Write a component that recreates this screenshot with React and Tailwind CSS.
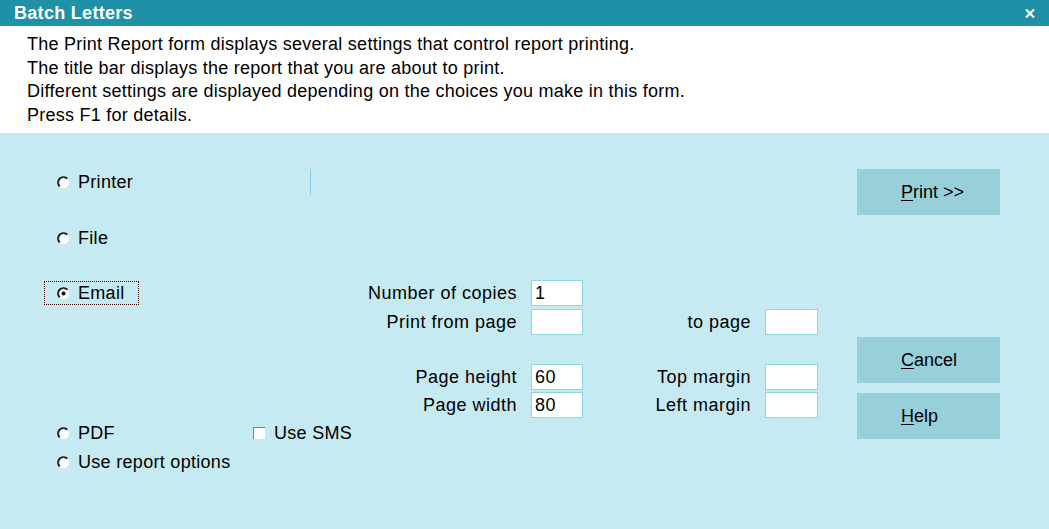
import React from "react";

const font = { fontFamily: '"Liberation Sans", Arial, sans-serif' };

const Radio = ({ checked }) => (
  <svg width="13" height="13" viewBox="0 0 13 13" className="shrink-0">
    <circle cx="6.5" cy="6.5" r="5.5" fill="#ffffff" />
    <path d="M2.6 10.4 A5.5 5.5 0 0 1 10.4 2.6" fill="none" stroke="#000" strokeWidth="1.6" />
    <path d="M3.3 9.7 A4.5 4.5 0 0 1 9.7 3.3" fill="none" stroke="#808080" strokeWidth="0.8" />
    {checked && <circle cx="6.5" cy="6.5" r="2" fill="#000" />}
  </svg>
);

const RadioRow = ({ label, checked, focused, className = "" }) => (
  <div
    className={`flex items-center h-[24px] pl-[12px] pr-[13px] border ${
      focused ? "border-dotted border-[#3a0000]" : "border-transparent"
    } ${className}`}
  >
    <Radio checked={checked} />
    <span className="ml-[8px] text-[18px] leading-none tracking-[0.3px] text-black">{label}</span>
  </div>
);

const Field = ({ value }) => (
  <div className="h-[26px] bg-white border border-[#8fd6e3] pl-[3px] flex items-center text-[18px] text-black">
    {value}
  </div>
);

const Button = ({ first, rest, className = "" }) => (
  <button
    className={`w-[143px] h-[46px] bg-[#97cfdb] text-[18px] text-black flex items-center justify-start pl-[44px] ${className}`}
  >
    <span>
      <span className="underline underline-offset-2">{first}</span>
      {rest}
    </span>
  </button>
);

const App = () => {
  return (
    <div className="w-[1049px] h-[529px] bg-[#c5eaf2] flex flex-col overflow-hidden" style={font}>
      {/* Title bar */}
      <div className="h-[26px] shrink-0 bg-[#1e91a7] flex items-center px-[14px]">
        <span className="text-white font-bold text-[18px] leading-none tracking-[0.3px]">Batch Letters</span>
        <svg width="10" height="9" viewBox="0 0 10 9" className="ml-auto">
          <path d="M1 0.5 L9 8.5 M9 0.5 L1 8.5" stroke="#fff" strokeWidth="2.2" />
        </svg>
      </div>

      {/* Description */}
      <div className="h-[107px] shrink-0 bg-white pl-[27px] pt-[7px] text-[18px] leading-[23.5px] tracking-[0.25px] text-black">
        <div>The Print Report form displays several settings that control report printing.</div>
        <div>The title bar displays the report that you are about to print.</div>
        <div>Different settings are displayed depending on the choices you make in this form.</div>
        <div>Press F1 for details.</div>
      </div>

      {/* Body */}
      <div className="flex pl-[44px] pt-[36px]">
        {/* Destination options */}
        <div className="w-[323px] flex flex-col items-start">
          <div className="flex items-center h-[26px] w-full">
            <RadioRow label="Printer" />
            <div className="ml-auto mr-[56px] w-px h-[26px] bg-[#7fd3e2]" />
          </div>
          <RadioRow label="File" className="mt-[31px]" />
          <RadioRow label="Email" checked focused className="mt-[31px]" />
          <div className="flex items-center mt-[116px]">
            <RadioRow label="PDF" className="w-[209px]" />
            <div className="w-[12px] h-[12px] bg-white border-t border-l border-[#808080] border-b-[#f4f4f4] border-r-[#f4f4f4]" />
            <span className="ml-[9px] text-[18px] leading-none tracking-[0.3px] text-black">Use SMS</span>
          </div>
          <RadioRow label="Use report options" className="mt-[5px]" />
        </div>

        {/* Print settings */}
        <div className="w-[451px] flex flex-col pt-[111px] text-[18px] leading-[26px] tracking-[0.5px] text-black">
          <div className="flex items-center">
            <span className="w-[150px] text-right">Number of copies</span>
            <div className="ml-[14px] w-[52px]">
              <Field value="1" />
            </div>
          </div>
          <div className="flex items-center mt-[3px]">
            <span className="w-[150px] text-right">Print from page</span>
            <div className="ml-[14px] w-[52px]">
              <Field />
            </div>
            <span className="w-[168px] text-right">to page</span>
            <div className="ml-[14px] w-[53px]">
              <Field />
            </div>
          </div>
          <div className="flex items-center mt-[29px]">
            <span className="w-[150px] text-right">Page height</span>
            <div className="ml-[14px] w-[52px]">
              <Field value="60" />
            </div>
            <span className="w-[168px] text-right">Top margin</span>
            <div className="ml-[14px] w-[53px]">
              <Field />
            </div>
          </div>
          <div className="flex items-center mt-[2px]">
            <span className="w-[150px] text-right">Page width</span>
            <div className="ml-[14px] w-[52px]">
              <Field value="80" />
            </div>
            <span className="w-[168px] text-right">Left margin</span>
            <div className="ml-[14px] w-[53px]">
              <Field />
            </div>
          </div>
        </div>

        {/* Buttons */}
        <div className="ml-[39px] flex flex-col">
          <Button first="P" rest="rint >>" />
          <Button first="C" rest="ancel" className="mt-[122px]" />
          <Button first="H" rest="elp" className="mt-[10px]" />
        </div>
      </div>
    </div>
  );
};

export default App;
